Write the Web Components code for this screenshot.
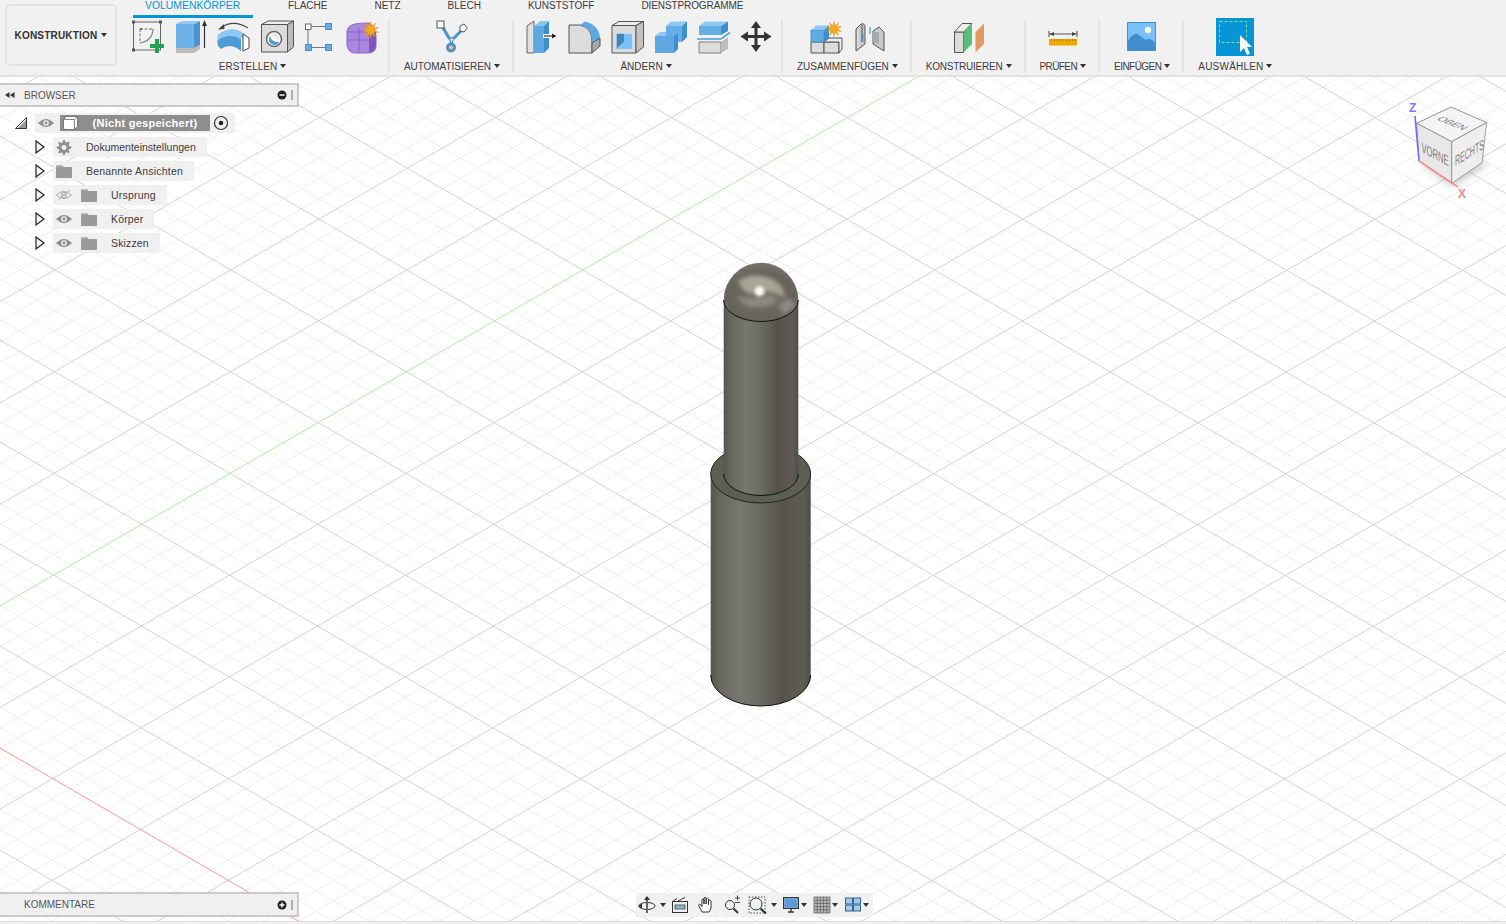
<!DOCTYPE html>
<html lang="de"><head><meta charset="utf-8"><title>Fusion</title>
<style>
html,body{margin:0;height:100%;overflow:hidden;background:#fff;font-family:"Liberation Sans",Arial,sans-serif}
</style></head><body>
<fx-app>
  <fx-toolbar slot="toolbar">
    <fx-workspace slot="workspace">KONSTRUKTION</fx-workspace>
    <fx-tab slot="tabs" active>VOLUMENKÖRPER</fx-tab>
    <fx-tab slot="tabs">FLACHE</fx-tab>
    <fx-tab slot="tabs">NETZ</fx-tab>
    <fx-tab slot="tabs">BLECH</fx-tab>
    <fx-tab slot="tabs">KUNSTSTOFF</fx-tab>
    <fx-tab slot="tabs" style="letter-spacing:-.1px">DIENSTPROGRAMME</fx-tab>
    <fx-group slot="groups" icons="sketch extrude revolve hole form purple" style="--shift:6px">ERSTELLEN</fx-group>
    <fx-group slot="groups" icons="auto" style="letter-spacing:-.07px">AUTOMATISIEREN</fx-group>
    <fx-group slot="groups" icons="press fillet shell combine split move" style="--shift:5px">ÄNDERN</fx-group>
    <fx-group slot="groups" icons="joint hinge" style="letter-spacing:-.04px">ZUSAMMENFÜGEN</fx-group>
    <fx-group slot="groups" icons="plane" style="letter-spacing:-.22px">KONSTRUIEREN</fx-group>
    <fx-group slot="groups" icons="measure" style="letter-spacing:-.6px">PRÜFEN</fx-group>
    <fx-group slot="groups" icons="image" style="letter-spacing:-.55px">EINFÜGEN</fx-group>
    <fx-group slot="groups" icons="select" style="letter-spacing:.2px" last>AUSWÄHLEN</fx-group>
  </fx-toolbar>
  <fx-viewport slot="viewport">
    <fx-browser>
      <fx-tree-root>(Nicht gespeichert)</fx-tree-root>
      <fx-tree-row icon="gear">Dokumenteinstellungen</fx-tree-row>
      <fx-tree-row icon="folder" style="letter-spacing:.2px">Benannte Ansichten</fx-tree-row>
      <fx-tree-row eye="off" icon="folder" style="letter-spacing:.2px">Ursprung</fx-tree-row>
      <fx-tree-row eye="on" icon="folder" style="letter-spacing:.15px">Körper</fx-tree-row>
      <fx-tree-row eye="on" icon="folder" style="letter-spacing:.15px">Skizzen</fx-tree-row>
    </fx-browser>
    <fx-cube></fx-cube>
    <fx-comments>KOMMENTARE</fx-comments>
    <fx-nav></fx-nav>
  </fx-viewport>
</fx-app>
<script>
const star=(cx,cy,r1,r2,n=10)=>{let p=[];for(let i=0;i<n*2;i++){const r=i%2?r2:r1,a=Math.PI*i/n;p.push((cx+r*Math.sin(a)).toFixed(1)+','+(cy-r*Math.cos(a)).toFixed(1))}return `<polygon points="${p.join(' ')}" fill="#f5a81c" stroke="#e08a00" stroke-width=".4"/>`};
const ICONS={
sketch:`<rect x="3.5" y="4" width="27" height="28" fill="none" stroke="#666" stroke-width="1"/>
 <g fill="#555"><rect x="2" y="2.5" width="3" height="3"/><rect x="29" y="2.5" width="3" height="3"/><rect x="2" y="30.5" width="3" height="3"/></g>
 <path d="M10 11H24M10 11V25" fill="none" stroke="#777" stroke-dasharray="3 1.5"/><path d="M23 11C23 18 18 24 10 25" fill="none" stroke="#888" stroke-width="1.2"/>
 <rect x="10" y="10" width="2" height="2" fill="#666"/>
 <path d="M25 21h4v5h5v4h-5v5h-4v-5h-5v-4h5z" fill="#1fa64a"/>`,
extrude:`<path d="M3 6H21V30H3Z" fill="#6db3ea"/><path d="M21 6 27 3V27L21 30Z" fill="#4a92cc"/><path d="M3 6 9 3H27L21 6Z" fill="#93c9f2"/>
 <path d="M3 30H21L27 27V31L21 35H3Z" fill="#bcbcbc"/><path d="M31.5 30V6" stroke="#333" stroke-width="1.2"/><path d="M31.5 2 29 8H34Z" fill="#333"/>`,
revolve:`<path d="M5 9.5Q18 1 32 10" fill="none" stroke="#444" stroke-width="1.1"/><path d="M2 11.5 8 6 8.5 11Z" fill="#444"/>
 <path d="M1.5 17Q15 6 29 16L25 21Q14 14 1.5 22Z" fill="#8cc6f2"/><path d="M1.5 22Q14 14 25 21V33Q14 24 5 31 3 29 1.5 27Z" fill="#4f9bd8"/>
 <path d="M27 16 33 20V30L27 33Z" fill="#fff" stroke="#444"/>`,
hole:`<path d="M2.5 6.5H28.5V34H2.5Z" fill="#dcdcdc" stroke="#555"/><path d="M2.5 6.5 9 3H34.5L28.5 6.5Z" fill="#eee" stroke="#555" stroke-linejoin="round"/><path d="M28.5 6.5 34.5 3V29L28.5 34Z" fill="#bbb" stroke="#555" stroke-linejoin="round"/>
 <circle cx="15" cy="21" r="7.5" fill="#fff" stroke="#666" stroke-width="1.5"/><path d="M11 18Q12 24 20 24 19 27 15 27 9 26 10 20Z" fill="#4f9bd8"/><path d="M12 16Q17 20 20 24 21 18 18 16 15 14 12 16Z" fill="#e7e7e7"/>`,
form:`<path d="M9 8.5H23M6 12V26M9 29.5H23" stroke="#777" stroke-width="1"/>
 <rect x="3.5" y="6" width="5.5" height="5.5" fill="#fff" stroke="#666"/><g fill="#64aee5" stroke="#4a90c8"><rect x="23.5" y="5.5" width="6" height="6"/><rect x="3.5" y="26.5" width="6" height="6"/><rect x="23.5" y="26.5" width="6" height="6"/></g>`,
purple:`<path d="M7 7Q11 5 24 5 30 8 31 18V28Q31 34 24 35H9Q3 34 2 27V14Q2 9 7 7Z" fill="#a987e0" stroke="#8d66cd"/><path d="M24 17 31 13V28Q30 33 24 35Z" fill="#7f56bd"/>
 <path d="M2 22H24M14 10V35M2 14H24" stroke="#8059c4" stroke-width=".8" fill="none"/>${star(25.5,12,8.5,3.7)}`,
auto:`<path d="M8 8 15 20M28 12 20 20M17.5 20V27" stroke="#4b93cb" stroke-width="3" fill="none"/><path d="M13 19H22L17.5 26Z" fill="#4b93cb"/><path d="M16 20.5H19.5L17.5 24.5Z" fill="#eee"/>
 <rect x="3" y="3" width="7" height="7" fill="#fff" stroke="#555"/><path d="M30 6 33.3 10 30 14 26 13 26 8Z" fill="#fff" stroke="#555"/>
 <circle cx="17" cy="29.5" r="5" fill="#4b93cb"/><circle cx="17" cy="29.5" r="2.5" fill="#ccc" stroke="#777" stroke-width=".8"/>`,
press:`<path d="M4 8 11 3V35H4Z" fill="#e0e0e0" stroke="#666" stroke-width="1"/><path d="M11 8H21V35H11Z" fill="#5fa8e2"/><path d="M11 8 17 3H26L21 8Z" fill="#8cc6f2"/><path d="M21 8 26 3V30L21 35Z" fill="#3f8ecb"/>
 <rect x="20" y="16" width="9" height="4" fill="#fff"/><path d="M21 18H30" stroke="#222" stroke-width="1.1"/><path d="M33.500 18 29 15.500V20.500Z" fill="#222"/>`,
fillet:`<path d="M3 7H14Q27 10 26 25V35H3Z" fill="#dcdcdc" stroke="#555"/><path d="M14 7 19 3.500Q33 7 34 20L26 25Q27 10 14 7Z" fill="#5fa8e2"/><path d="M26 25 34 20V28L26 35Z" fill="#a8a8a8" stroke="#555" stroke-linejoin="round"/>`,
shell:`<path d="M3 7.500H27V35H3Z" fill="#dcdcdc" stroke="#555"/><path d="M3 7.500 10 3.500H34.500L27 7.500Z" fill="#eee" stroke="#555" stroke-linejoin="round"/><path d="M27 7.500 34.500 3.500V29L27 35Z" fill="#c2c2c2" stroke="#555" stroke-linejoin="round"/>
 <rect x="7" y="15" width="17" height="16" fill="#fff"/><path d="M7.500 15.500H15V24L7.500 31Z" fill="#3f86bf"/><path d="M15 15.500H23.500V31H7.500L15 24Z" fill="#7dc0f6"/>`,
combine:`<path d="M14 8H30V24H25V18H14Z" fill="#66aee6"/><path d="M14 8 19 3.500H35L30 8Z" fill="#8fc8f2"/><path d="M30 8 35 3.500V19L30 24Z" fill="#3f8ecb"/>
 <path d="M3 18H22V35H3Z" fill="#5fa8e2"/><path d="M3 18 8 14H14V18Z" fill="#8fc8f2"/><path d="M22 18 26 15V31L22 35Z" fill="#3f8ecb"/>`,
split:`<path d="M4 8H26V17H4Z" fill="#66aee6"/><path d="M4 8 10 3.500H33L26 8Z" fill="#8fc8f2"/><path d="M26 8 33 3.500V13L26 17Z" fill="#3f8ecb"/>
 <path d="M2 21H26L35 14.500" fill="none" stroke="#4d9ee0" stroke-width="1.6"/>
 <path d="M4 24H26V35H4Z" fill="#dcdcdc" stroke="#666" stroke-width=".8"/><path d="M26 24 33 19V31L26 35Z" fill="#bdbdbd"/>`,
move:`<path d="M18 3 23 10H19.500V17H26V13.500L33.500 18.500 26 23.500V20H19.500V27H23L18 34 13 27H16.500V20H10V23.500L2.500 18.500 10 13.500V17H16.500V10H13Z" fill="#333"/>`,
joint:`<path d="M3 24H16V35H3Z" fill="#dcdcdc" stroke="#555"/><path d="M16 24H31V35H16Z" fill="#dcdcdc" stroke="#555"/><path d="M16 24 21 20H34V31L31 35V24Z" fill="#eee" stroke="#555" stroke-linejoin="round"/>
 <path d="M3 12H16V24H3Z" fill="#62ace6" stroke="#4a90c8"/><path d="M3 12 8 7.500H21L16 12Z" fill="#8fc8f2"/><path d="M16 12 21 7.500V20L16 24Z" fill="#3f8ecb"/>${star(26,11,7.800,3.400)}`,
hinge:`<path d="M5 11 10 6Q14 5 14 9V26L5 33Z" fill="#c9c9c9" stroke="#555"/><path d="M7 12V30" stroke="#eee"/><path d="M11 7V24" stroke="#888" stroke-width="2"/>
 <path d="M22 13 28 9 33 14V33L22 26Z" fill="#c9c9c9" stroke="#555"/><path d="M22 14H28V26L22 24Z" fill="#aaa"/>
 <path d="M19 9V16M12 16V24" stroke="#2b8fdc" stroke-width="1"/>`,
plane:`<path d="M3.500 14V34.500H12.500V14Z" fill="#dcdcdc" stroke="#555"/><path d="M3.500 14 11 5.500H21L12.500 14Z" fill="#eee" stroke="#555"/>
 <path d="M12.500 14 21 5.500V26L12.500 34.500Z" fill="#56c07a"/><path d="M24.500 14 33 5.500V26L24.500 34.500Z" fill="#e39a62"/>`,
measure:`<path d="M4 13V19M32 13V19" stroke="#444" stroke-width="1"/><path d="M5 16H31" stroke="#555"/><path d="M4.500 16 9 14V18ZM31.500 16 27 14V18Z" fill="#444"/>
 <rect x="4" y="21" width="28" height="6.500" fill="#f2a900"/><path d="M6.500 21v2M9.500 21v2M12.500 21v2M15.500 21v2M18.500 21v2M21.500 21v2M24.500 21v2M27.500 21v2M30 21v2" stroke="#7a5a00" stroke-width=".6"/>`,
image:`<rect x="3.500" y="4.500" width="28" height="28" fill="#78c0f7" stroke="#4a90c8"/><path d="M4 32V23Q10 13 15 17 19 20 22 22 26 19 31 25V32Z" fill="#3f8ecb"/><circle cx="24" cy="12" r="3.200" fill="#fdf6d8"/>`,
select:`<rect x="0" y="0" width="38" height="38" fill="#0696d7"/><rect x="3.500" y="3.500" width="27" height="21" fill="none" stroke="#8ed98e" stroke-width="1" stroke-dasharray="3 2"/>
 <path d="M24 17V34L28 30 31 37 34 35.500 31 29H36Z" fill="#fff"/>`,
gear:`<path d="M8 0h2l.500 2.300 1.700.700 2-1.300 1.400 1.400-1.300 2 .700 1.700L17.300 7.500v2l-2.300.5-.7 1.700 1.300 2-1.400 1.400-2-1.300-1.700.7L10 17H8l-.5-2.300-1.700-.7-2 1.300-1.400-1.400 1.300-2L3 10.200.7 9.700v-2L3 7.200l.7-1.700-1.300-2L3.800 2.100l2 1.300 1.700-.7Z" fill="#8f8f8f"/><circle cx="9" cy="8.500" r="2.800" fill="#f0f0f0"/>`,
folder:`<path d="M0 2H6L7.500 4H16V15H0Z" fill="#9a9a9a"/><path d="M0 2H6L7 3.500H0Z" fill="#bbb"/>`
};
const DEF=(n,c)=>customElements.define(n,c);
const shadow=(el,html)=>{el.attachShadow({mode:'open'}).innerHTML=html};
const CARET=`<span style="display:inline-block;width:0;margin-left:3px;border:3px solid transparent;border-top:4px solid #333;border-bottom:0;vertical-align:2px"></span>`;

DEF('fx-app',class extends HTMLElement{connectedCallback(){shadow(this,`<style>
:host{display:flex;flex-direction:column;width:1506px;height:924px;overflow:hidden;color:#3c3c3c;font:11px "Liberation Sans",Arial,sans-serif}
::slotted([slot=viewport]){flex:1}
.strip{height:2px;background:#f1f1f1;border-top:1px solid #ddd}
</style><slot name="toolbar"></slot><slot name="viewport"></slot><div class="strip"></div>`)}});

DEF('fx-toolbar',class extends HTMLElement{connectedCallback(){shadow(this,`<style>
:host{display:flex;height:75px;background:#f1f1f1;border-bottom:2px solid #e2e2e2;box-sizing:content-box;flex:none;padding-left:5px;gap:4px;position:relative;z-index:2}
.main{display:flex;flex-direction:column}
.tabs{display:flex;height:18px;padding-left:12px;gap:23px}
.groups{display:flex}
</style><slot name="workspace"></slot><div class="main"><div class="tabs"><slot name="tabs"></slot></div><div class="groups"><slot name="groups"></slot></div></div>`)}});

DEF('fx-workspace',class extends HTMLElement{connectedCallback(){shadow(this,`<style>
:host{display:flex;align-items:center;justify-content:center;gap:1px;box-sizing:border-box;width:112px;height:62px;margin-top:4px;border:2px solid #e2e2e2;border-radius:5px;font:bold 10px "Liberation Sans",Arial,sans-serif;color:#333;letter-spacing:.2px}
</style><slot></slot>${CARET}`)}});

DEF('fx-tab',class extends HTMLElement{connectedCallback(){shadow(this,`<style>
:host{display:block;box-sizing:border-box;height:18px;padding:0 12px;font-size:10px;line-height:11px;color:#3c3c3c;white-space:nowrap}
:host([active]){color:#0696d7;border-bottom:3px solid #0696d7;font-size:10.400px;width:120px}
</style><slot></slot>`)}});

DEF('fx-icon',class extends HTMLElement{connectedCallback(){const n=this.getAttribute('name');const w=n==='select'?38:36;
 shadow(this,`<style>:host{display:block;flex:none;width:${w}px;height:${w}px}svg{display:block}</style><svg width="${w}" height="${w}" viewBox="0 0 ${w} ${w}">${ICONS[n]}</svg>`)}});

DEF('fx-group',class extends HTMLElement{connectedCallback(){const ic=this.getAttribute('icons').split(' ').map(n=>`<fx-icon name="${n}"></fx-icon>`).join('');
 shadow(this,`<style>
:host{display:flex;flex-direction:column;align-items:center;box-sizing:border-box;height:57px;padding:0 9px;position:relative}
:host(:not([last]))::after{content:"";position:absolute;right:0;top:2px;bottom:3px;width:2px;background:#e2e2e2}
.ic{display:flex;gap:7px;height:38px;justify-content:center}
.lb{margin:5px calc(5px + var(--shift,0px)) 0 5px;font-size:10px;line-height:12px;white-space:nowrap;color:#3c3c3c}
</style><div class="ic">${ic}</div><div class="lb"><slot></slot>${CARET}</div>`)}});

DEF('fx-viewport',class extends HTMLElement{connectedCallback(){
 const W=1506,Y0=77,Y1=924;let minor='',major='';
 const s1=.5765,c1=606,d1=20.3,s2=.58,c2=748,d2=20.4;
 for(let k=-60;k<160;k++){const c=c1+k*d1;const l=`M0 ${c.toFixed(1)}L${W} ${(c-s1*W).toFixed(1)}`;if(k%5===0){if(k!==0)major+=l}else minor+=l}
 for(let k=-160;k<60;k++){const c=c2+k*d2;const l=`M0 ${c.toFixed(1)}L${W} ${(c+s2*W).toFixed(1)}`;if(k%5===0){if(k!==0)major+=l}else minor+=l}
 shadow(this,`<style>
:host{display:block;position:relative;overflow:hidden;background:#fff}
svg{position:absolute;left:0;top:0}
</style>
<svg width="${W}" height="${Y1-Y0}" viewBox="0 ${Y0} ${W} ${Y1-Y0}" fill="none">
<path d="${minor}" stroke="#efefef"/><path d="${major}" stroke="#d2d2d2"/>
<path d="M0 ${c1}L${W} ${c1-s1*W}" stroke="#a8f09c"/><path d="M0 ${c2}L${W} ${c2+s2*W}" stroke="#ff9494"/>
<defs>
<linearGradient id="cyl"><stop offset="0" stop-color="#55554f"/><stop offset=".08" stop-color="#66665f"/><stop offset=".3" stop-color="#777770"/><stop offset=".5" stop-color="#6a6a62"/><stop offset=".72" stop-color="#555249"/><stop offset=".92" stop-color="#5e5d55"/><stop offset="1" stop-color="#4e4e48"/></linearGradient>
<radialGradient id="dm" cx=".5" cy=".6" r=".62"><stop offset="0" stop-color="#6f6c63"/><stop offset=".65" stop-color="#666359"/><stop offset="1" stop-color="#7d7c75"/></radialGradient>
<radialGradient id="hl"><stop offset="0" stop-color="#fff"/><stop offset=".4" stop-color="#f0eee8"/><stop offset="1" stop-color="#b8b2a6" stop-opacity="0"/></radialGradient>
<filter id="bl" x="-40%" y="-40%" width="180%" height="180%"><feGaussianBlur stdDeviation="2.200"/></filter>
<clipPath id="dc"><path d="M723.700 300A37.300 37.300 0 0 1 798.300 300A37.300 21.500 0 0 1 723.700 300Z"/></clipPath>
</defs>
<path d="M710.700 474V675A50 31 0 0 0 810.700 675V474Z" fill="url(#cyl)"/>
<path d="M710.700 675A50 31 0 0 0 810.700 675" stroke="#111"/>
<ellipse cx="760.700" cy="474" rx="50" ry="29" fill="#5e5e56" stroke="#222"/>
<path d="M723.700 300V474A37.300 21.500 0 0 0 798.300 474V300Z" fill="url(#cyl)"/>
<path d="M723.700 474A37.300 21.500 0 0 0 798.300 474" stroke="#111"/>
<g clip-path="url(#dc)">
<rect x="720" y="260" width="82" height="65" fill="url(#dm)"/>
<path d="M738 281Q752 271 772 279 786 287 784 298 770 288 752 294 742 293 738 281Z" fill="#a9a498" filter="url(#bl)"/>
<path d="M737 296Q750 300 764 296 774 294 778 300 772 308 752 307 741 305 737 296Z" fill="#8e8a7f" filter="url(#bl)"/>
<path d="M778 304 790 298 796 306 784 315Z" fill="#8c8a82" filter="url(#bl)"/>
<circle cx="759.500" cy="291" r="8" fill="url(#hl)"/>
</g>
<path d="M723.700 300A37.300 21.500 0 0 0 798.300 300" stroke="#111"/>
</svg><slot></slot>`)}});

DEF('fx-browser',class extends HTMLElement{connectedCallback(){shadow(this,`<style>
:host{position:absolute;left:0;top:6px;width:299px;display:block}
.h{box-sizing:border-box;height:24px;background:#f0f0f0;border:solid #c9c9c9;border-width:2px 2px 2px 0;display:flex;align-items:center;font-size:10px;color:#555}
.r{width:24px;display:flex;padding-left:5px;box-sizing:border-box}
.s{flex:1}
.tree{padding-top:4px}
</style><div class="h"><div class="r"><svg width="10" height="6" viewBox="0 0 10 6"><path d="M4.500 0V6L0 3ZM9.500 0V6L5 3Z" fill="#333"/></svg></div>BROWSER<div class="s"></div>
<svg width="20" height="12" viewBox="0 0 20 12"><circle cx="5" cy="6" r="4.500" fill="#222"/><path d="M2.500 6H7.500" stroke="#fff" stroke-width="1.400"/><path d="M15 1V11" stroke="#666"/></svg></div><div class="tree"><slot></slot></div>`)}});

const EYE=(off)=>`<svg width="16" height="12" viewBox="0 0 16 12" style="flex:none"><path d="M.5 6Q8-1 15.500 6 8 13 .5 6Z" fill="${off?'none':'#8f8f8f'}" stroke="${off?'#aaa':'#8f8f8f'}"/><circle cx="8" cy="6" r="2.800" fill="${off?'none':'#f0f0f0'}" stroke="${off?'#aaa':'none'}"/><circle cx="8" cy="6" r="1.400" fill="${off?'#bbb':'#8f8f8f'}"/>${off?'<path d="M2 11 14 1" stroke="#aaa"/>':''}</svg>`;

DEF('fx-tree-root',class extends HTMLElement{connectedCallback(){shadow(this,`<style>
:host{display:flex;align-items:center;height:24px;padding-left:15px}
.bg{display:flex;align-items:center;height:20px;width:200px;margin-left:8px;background:#f0f0f0;box-sizing:border-box;padding-left:3px}
.sel{display:flex;align-items:center;width:150px;height:16px;margin-left:6px;background:#8e8e8e;color:#fff;font-weight:bold;font-size:11px;letter-spacing:.27px;box-sizing:border-box;padding-left:3px}
.t{flex:1;text-align:center;padding-left:2px;white-space:nowrap}
</style><svg width="12" height="12" viewBox="0 0 12 12"><path d="M.5 11.500 11.500 .5V11.500Z" fill="none" stroke="#333"/><path d="M3 11H11V3Z" fill="#555" opacity=".6"/></svg>
<div class="bg">${EYE(false)}<div class="sel"><svg width="15" height="14" viewBox="0 0 15 14"><path d="M.5 3.500 3.500 .5H14.500V10.500L11.500 13.500H2Q.5 13.500 .5 12ZM.5 3.500H11.500V13.500M11.500 3.500 14.500 .5" fill="#fff" stroke="#666" stroke-width=".8"/></svg><div class="t"><slot></slot></div></div>
<svg width="16" height="16" viewBox="0 0 16 16" style="margin-left:3px"><circle cx="8" cy="8" r="6.500" fill="none" stroke="#333" stroke-width="1.200"/><circle cx="8" cy="8" r="2.300" fill="#222"/></svg></div>`)}});

DEF('fx-tree-row',class extends HTMLElement{connectedCallback(){const e=this.getAttribute('eye'),ic=this.getAttribute('icon');
 const pic=ic==='gear'?`<svg width="18" height="17" viewBox="0 0 18 17">${ICONS.gear}</svg>`:`<svg width="16" height="15" viewBox="0 1 16 15">${ICONS.folder}</svg>`;
 shadow(this,`<style>
:host{display:flex;align-items:center;height:24px;padding-left:35px}
.bg{display:flex;align-items:center;height:20px;margin-left:8px;background:#f0f0f0;padding:0 11px 0 3px;font-size:10.500px;color:#3c3c3c}
.e{margin-right:9px;display:flex}
.p{width:16px;height:15px;display:flex;align-items:center;justify-content:center;margin-right:14px}
</style><svg width="10" height="14" viewBox="0 0 10 14"><path d="M1 1 9 7 1 13Z" fill="#f6f6f6" stroke="#222" stroke-width="1.200"/></svg>
<div class="bg">${e?`<span class="e">${EYE(e==='off')}</span>`:''}<span class="p">${pic}</span><slot></slot></div>`)}});

DEF('fx-comments',class extends HTMLElement{connectedCallback(){shadow(this,`<style>
:host{position:absolute;left:0;bottom:4px;width:299px;height:25px;box-sizing:border-box;background:#f0f0f0;border:solid #c9c9c9;border-width:2px 2px 2px 0;display:flex;align-items:center;padding-left:24px;font-size:10px;color:#555}
.s{flex:1}
</style><slot></slot><div class="s"></div><svg width="20" height="12" viewBox="0 0 20 12"><circle cx="5" cy="6" r="4.500" fill="#222"/><path d="M2.500 6H7.500M5 3.500V8.500" stroke="#fff" stroke-width="1.400"/><path d="M15 1V11" stroke="#666"/></svg>`)}});

DEF('fx-cube',class extends HTMLElement{connectedCallback(){shadow(this,`<style>
:host{position:absolute;right:0;top:13px;width:116px;height:120px;display:block}
svg{display:block}text{font:10.500px "Liberation Sans",Arial,sans-serif;fill:#7d7d83}
</style><svg width="116" height="120" viewBox="1390 90 116 120">
<defs><filter id="b" x="-40%" y="-40%" width="180%" height="180%"><feGaussianBlur stdDeviation="4"/></filter></defs>
<path d="M1422 163 1452 186 1488 164 1470 158Z" fill="#888" opacity=".5" filter="url(#b)"/>
<path d="M1451 107 1486.700 122.500 1451.700 141.700 1416.700 123.300Z" fill="#f4f4f4" stroke="#777" stroke-width=".8"/>
<path d="M1416.700 123.300 1451.700 141.700 1451.700 183.300 1419 160.700Z" fill="#e8e8e8" stroke="#888" stroke-width=".8"/>
<path d="M1451.700 141.700 1486.700 122.500 1482 162.700 1451.700 183.300Z" fill="#eeeeee" stroke="#888" stroke-width=".8"/>
<text transform="matrix(.85 .34 -.85 .42 1436 119.500)" style="font-size:11px">OBEN</text>
<text transform="matrix(.73 .38 0 1.350 1421.500 152)">VORNE</text>
<text transform="matrix(.67 -.4 0 1.350 1455 166)">RECHTS</text>
<path d="M1419 161 1415 116" stroke="#6e6ef2" stroke-width="1.600"/><path d="M1419 161 1458 187" stroke="#f48f8f" stroke-width="1.600"/>
<text x="1409" y="112" style="font:bold 12px 'Liberation Sans';fill:#7878f5">Z</text>
<text x="1458" y="198" style="font:bold 12px 'Liberation Sans';fill:#f58a8a">X</text>
</svg>`)}});

DEF('fx-nav',class extends HTMLElement{connectedCallback(){
 const i=(w,m,s)=>`<svg style="margin-left:${m}px" width="${w}" height="20" viewBox="0 0 ${w} 20">${s}</svg>`;
 const c=(m)=>`<span class="c" style="margin-left:${m}px"></span>`;
 const orbit=i(20,1,`<ellipse cx="10" cy="11" rx="8" ry="3.500" fill="none" stroke="#333"/><path d="M10 1 7 5H9V18H11V5H13ZM1 11 5 8.500V13.500Z" fill="#333"/><path d="M10 5V19" stroke="#fff" stroke-width=".5"/>`);
 const look=i(18,5,`<rect x="1.500" y="6.500" width="15" height="11" fill="#eee" stroke="#333"/><rect x="4" y="10" width="10" height="4" fill="#8ab4d4" stroke="#333" stroke-width=".7"/><path d="M1.500 6.500 6 3.500M7 6 14 2.500" stroke="#333"/>`);
 const hand=i(18,8,`<path d="M5 17Q3 13 1.500 10Q2 8.500 4 10L5 11.500V4.500Q6 3 7 4.500V9V3Q8 1.500 9.200 3V9V3.500Q10.500 2.500 11.500 4V9.500V5.500Q12.800 4.500 14 6V13Q13 16 12 17Z" fill="#fff" stroke="#333" stroke-linejoin="round"/>`);
 const zoom=i(18,8,`<circle cx="7" cy="10" r="4.500" fill="#eef4f8" stroke="#333"/><path d="M10.500 13.500 15 18" stroke="#333" stroke-width="2"/><path d="M12 3H17M14.500 .5V5.500M12 7.500H17" stroke="#333" stroke-width=".9"/>`);
 const fit=i(20,7,`<rect x="1" y="2" width="16" height="16" fill="none" stroke="#555" stroke-dasharray="1.500 1.500"/><circle cx="8" cy="9" r="6" fill="#eef4f8" stroke="#333"/><path d="M12.500 13.500 18 18.500" stroke="#333" stroke-width="2.200"/>`);
 const disp=i(18,5,`<rect x="1.500" y="2.500" width="15" height="11" fill="#7aa6d0" stroke="#333"/><rect x="3" y="4" width="12" height="8" fill="#5e9ad6"/><path d="M6 17H12M9 14V17" stroke="#333" stroke-width="1.400"/>`);
 let g='';for(let x=2;x<=18;x+=3.200)g+=`M${x} 2V18M2 ${x}H18`;
 const grid=i(20,5,`<rect x="2" y="2" width="16" height="16" fill="#bbb"/><path d="${g}" stroke="#555" stroke-width=".7"/>`);
 const vp=i(18,6,`<g fill="#a8c8e8" stroke="#35648f"><rect x="1.500" y="3" width="7" height="6"/><rect x="9.500" y="3" width="7" height="6"/><rect x="1.500" y="10" width="7" height="6"/><rect x="9.500" y="10" width="7" height="6"/></g>`);
 shadow(this,`<style>
:host{position:absolute;left:636px;bottom:4px;width:237px;height:24px;background:#f1f1f1;display:flex;align-items:center;box-sizing:border-box}
svg{display:block;flex:none}
.c{border:3px solid transparent;border-top:4px solid #333;border-bottom:0;flex:none}
</style>${orbit}${c(3)}${look}${hand}${zoom}${fit}${c(3)}${disp}${c(1)}${grid}${c(0)}${vp}${c(1)}`)}});
</script>
</body></html>
